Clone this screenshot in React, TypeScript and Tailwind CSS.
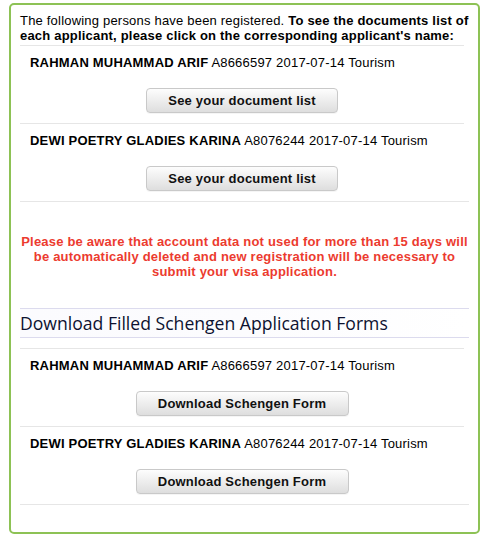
const applicants = [
  { name: 'RAHMAN MUHAMMAD ARIF', passport: 'A8666597', date: '2017-07-14', purpose: 'Tourism' },
  { name: 'DEWI POETRY GLADIES KARINA', passport: 'A8076244', date: '2017-07-14', purpose: 'Tourism' },
]

function ActionButton({ label, widthClassName }: { label: string; widthClassName: string }) {
  return (
    <button
      type="button"
      className={`h-[25px] ${widthClassName} rounded-[4px] border border-[#c9c9c9] bg-gradient-to-b from-[#fdfdfd] to-[#dedede] text-[13px] font-bold tracking-[0.2px] text-[#111] shadow-[0_1px_0_rgba(0,0,0,0.04)]`}
    >
      {label}
    </button>
  )
}

function ApplicantRow({
  applicant,
  buttonLabel,
  buttonWidth,
}: {
  applicant: (typeof applicants)[number]
  buttonLabel: string
  buttonWidth: string
}) {
  return (
    <div className="w-[444px] border-t border-[#e6e6e6] pt-[9px] pb-[10px]">
      <div className="pl-[10px] text-[13px] leading-[16px] tracking-[0.2px] text-black">
        <span className="font-bold">{applicant.name}</span> {applicant.passport} {applicant.date}{' '}
        {applicant.purpose}
      </div>
      <div className="mt-[17px] flex justify-center">
        <ActionButton label={buttonLabel} widthClassName={buttonWidth} />
      </div>
    </div>
  )
}

export default function App() {
  return (
    <div className="h-[536px] w-[484px] bg-white pt-[3px] pl-[9px] [font-family:'Liberation_Sans',Arial,sans-serif]">
      <div className="h-[531px] w-[471px] rounded-[5px] border-2 border-[#8dc255] px-[9px] pt-[8px]">
        <p className="pb-[2px] text-[13px] leading-[15px] tracking-[0.2px] text-black">
          The following persons have been registered.{' '}
          <span className="font-bold">
            To see the documents list of each applicant, please click on the corresponding applicant's name:
          </span>
        </p>

        {applicants.map((a) => (
          <ApplicantRow key={a.passport} applicant={a} buttonLabel="See your document list" buttonWidth="w-[192px]" />
        ))}
        <div className="border-t border-[#e6e6e6]" />

        <p className="mt-[32px] text-center text-[13px] font-bold leading-[15px] tracking-[0.2px] text-[#ec3b2f]">
          Please be aware that account data not used for more than 15 days will be automatically deleted and new
          registration will be necessary to submit your visa application.
        </p>

        <h2 className="mt-[29px] flex h-[30px] items-center border-y border-[#dcdbee] bg-gradient-to-r from-[#fbfbfe] via-[#fcfcfe] to-white pt-[1px] text-[17.6px] leading-none text-[#0d1230] [font-family:'Open_Sans',sans-serif]">
          Download Filled Schengen Application Forms
        </h2>

        <div className="mt-[10px]">
          {applicants.map((a) => (
            <ApplicantRow key={a.passport} applicant={a} buttonLabel="Download Schengen Form" buttonWidth="w-[213px]" />
          ))}
          <div className="border-t border-[#e6e6e6]" />
        </div>
      </div>
    </div>
  )
}
